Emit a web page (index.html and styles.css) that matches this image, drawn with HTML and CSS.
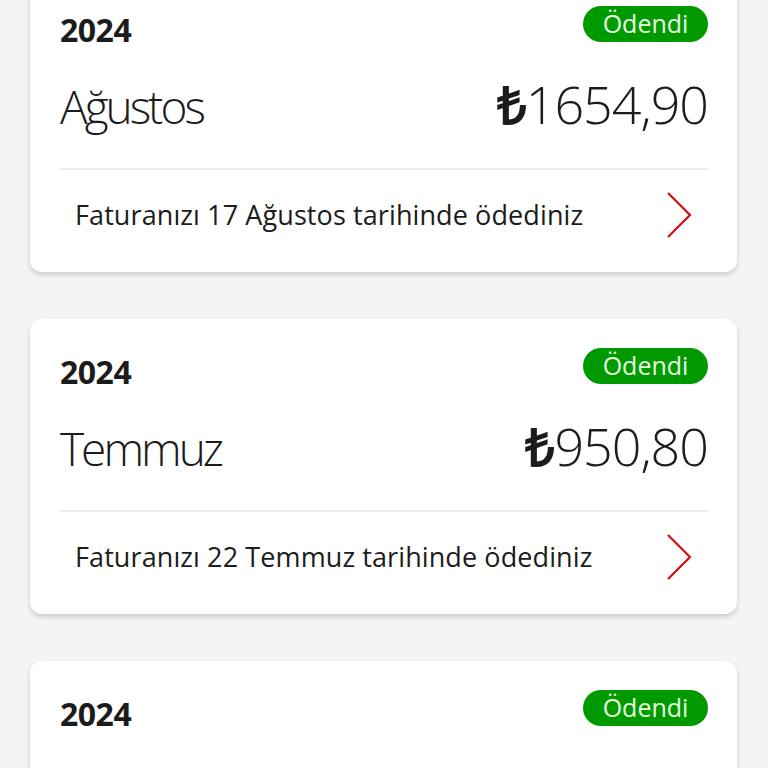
FILE: index.html
```html
<!DOCTYPE html>
<html lang="tr">
<head>
<meta charset="utf-8">
<link rel="stylesheet" href="styles.css">
</head>
<body>
<div class="list">
  <div class="card">
    <div class="top">
      <span class="year">2024</span>
      <span class="badge">Ödendi</span>
    </div>
    <div class="mid">
      <span class="month">Ağustos</span>
      <span class="amount"><span class="cur">₺</span>1654,90</span>
    </div>
    <div class="divider"></div>
    <div class="bottom">
      <span class="info">Faturanızı 17 Ağustos tarihinde ödediniz</span>
      <svg class="chev" width="26" height="46" viewBox="0 0 26 46"><path d="M2 1 L24 23 L2 45" fill="none" stroke="#dc0a0a" stroke-width="2.2"/></svg>
    </div>
  </div>
  <div class="card">
    <div class="top">
      <span class="year">2024</span>
      <span class="badge">Ödendi</span>
    </div>
    <div class="mid">
      <span class="month">Temmuz</span>
      <span class="amount"><span class="cur">₺</span>950,80</span>
    </div>
    <div class="divider"></div>
    <div class="bottom">
      <span class="info">Faturanızı 22 Temmuz tarihinde ödediniz</span>
      <svg class="chev" width="26" height="46" viewBox="0 0 26 46"><path d="M2 1 L24 23 L2 45" fill="none" stroke="#dc0a0a" stroke-width="2.2"/></svg>
    </div>
  </div>
  <div class="card">
    <div class="top">
      <span class="year">2024</span>
      <span class="badge">Ödendi</span>
    </div>
  </div>
</div>
</body>
</html>
```
FILE: styles.css
```css
html, body {
  margin: 0;
  padding: 0;
  background: #f4f4f4;
  height: 768px;
  overflow: hidden;
}
body {
  font-family: "Open Sans", "Liberation Sans", sans-serif;
  color: #1c1c1c;
}
.list {
  margin-top: -23px;
  display: flex;
  flex-direction: column;
  gap: 47px;
}
.card {
  background: #fff;
  border-radius: 12px;
  margin: 0 31px 0 30px;
  height: 295px;
  box-sizing: border-box;
  padding: 29px 29px 0 30px;
  box-shadow: 0 3px 5px rgba(0,0,0,0.16);
  flex-shrink: 0;
}
.top {
  display: flex;
  justify-content: space-between;
  align-items: flex-start;
  height: 36px;
}
.year {
  font-size: 32px;
  font-weight: 700;
  line-height: 36px;
  padding-top: 6px;
  letter-spacing: -0.5px;
}
.badge {
  background: #009a00;
  color: #e8ffe0;
  border-radius: 18px;
  height: 36px;
  width: 125px;
  box-sizing: border-box;
  text-align: center;
  font-size: 25px;
  line-height: 34px;
  font-stretch: 90%;
}
.mid {
  display: flex;
  justify-content: space-between;
  align-items: baseline;
  margin-top: 27px;
  height: 70px;
}
.month, .amount {
  font-size: 52px;
  font-weight: 300;
  line-height: 70px;
  letter-spacing: -1px;
}
.month {
  font-size: 46px;
  letter-spacing: -3px;
}
.cur {
  font-weight: 700;
}
.divider {
  height: 2px;
  background: #ececec;
  margin-top: 29px;
}
.bottom {
  display: flex;
  justify-content: space-between;
  align-items: center;
  height: 90px;
  padding-left: 15px;
  padding-right: 16px;
}
.info {
  font-size: 27px;
  line-height: 32px;
  font-stretch: 95%;
  letter-spacing: 0.1px;
}
.chev {
  display: block;
}
```
